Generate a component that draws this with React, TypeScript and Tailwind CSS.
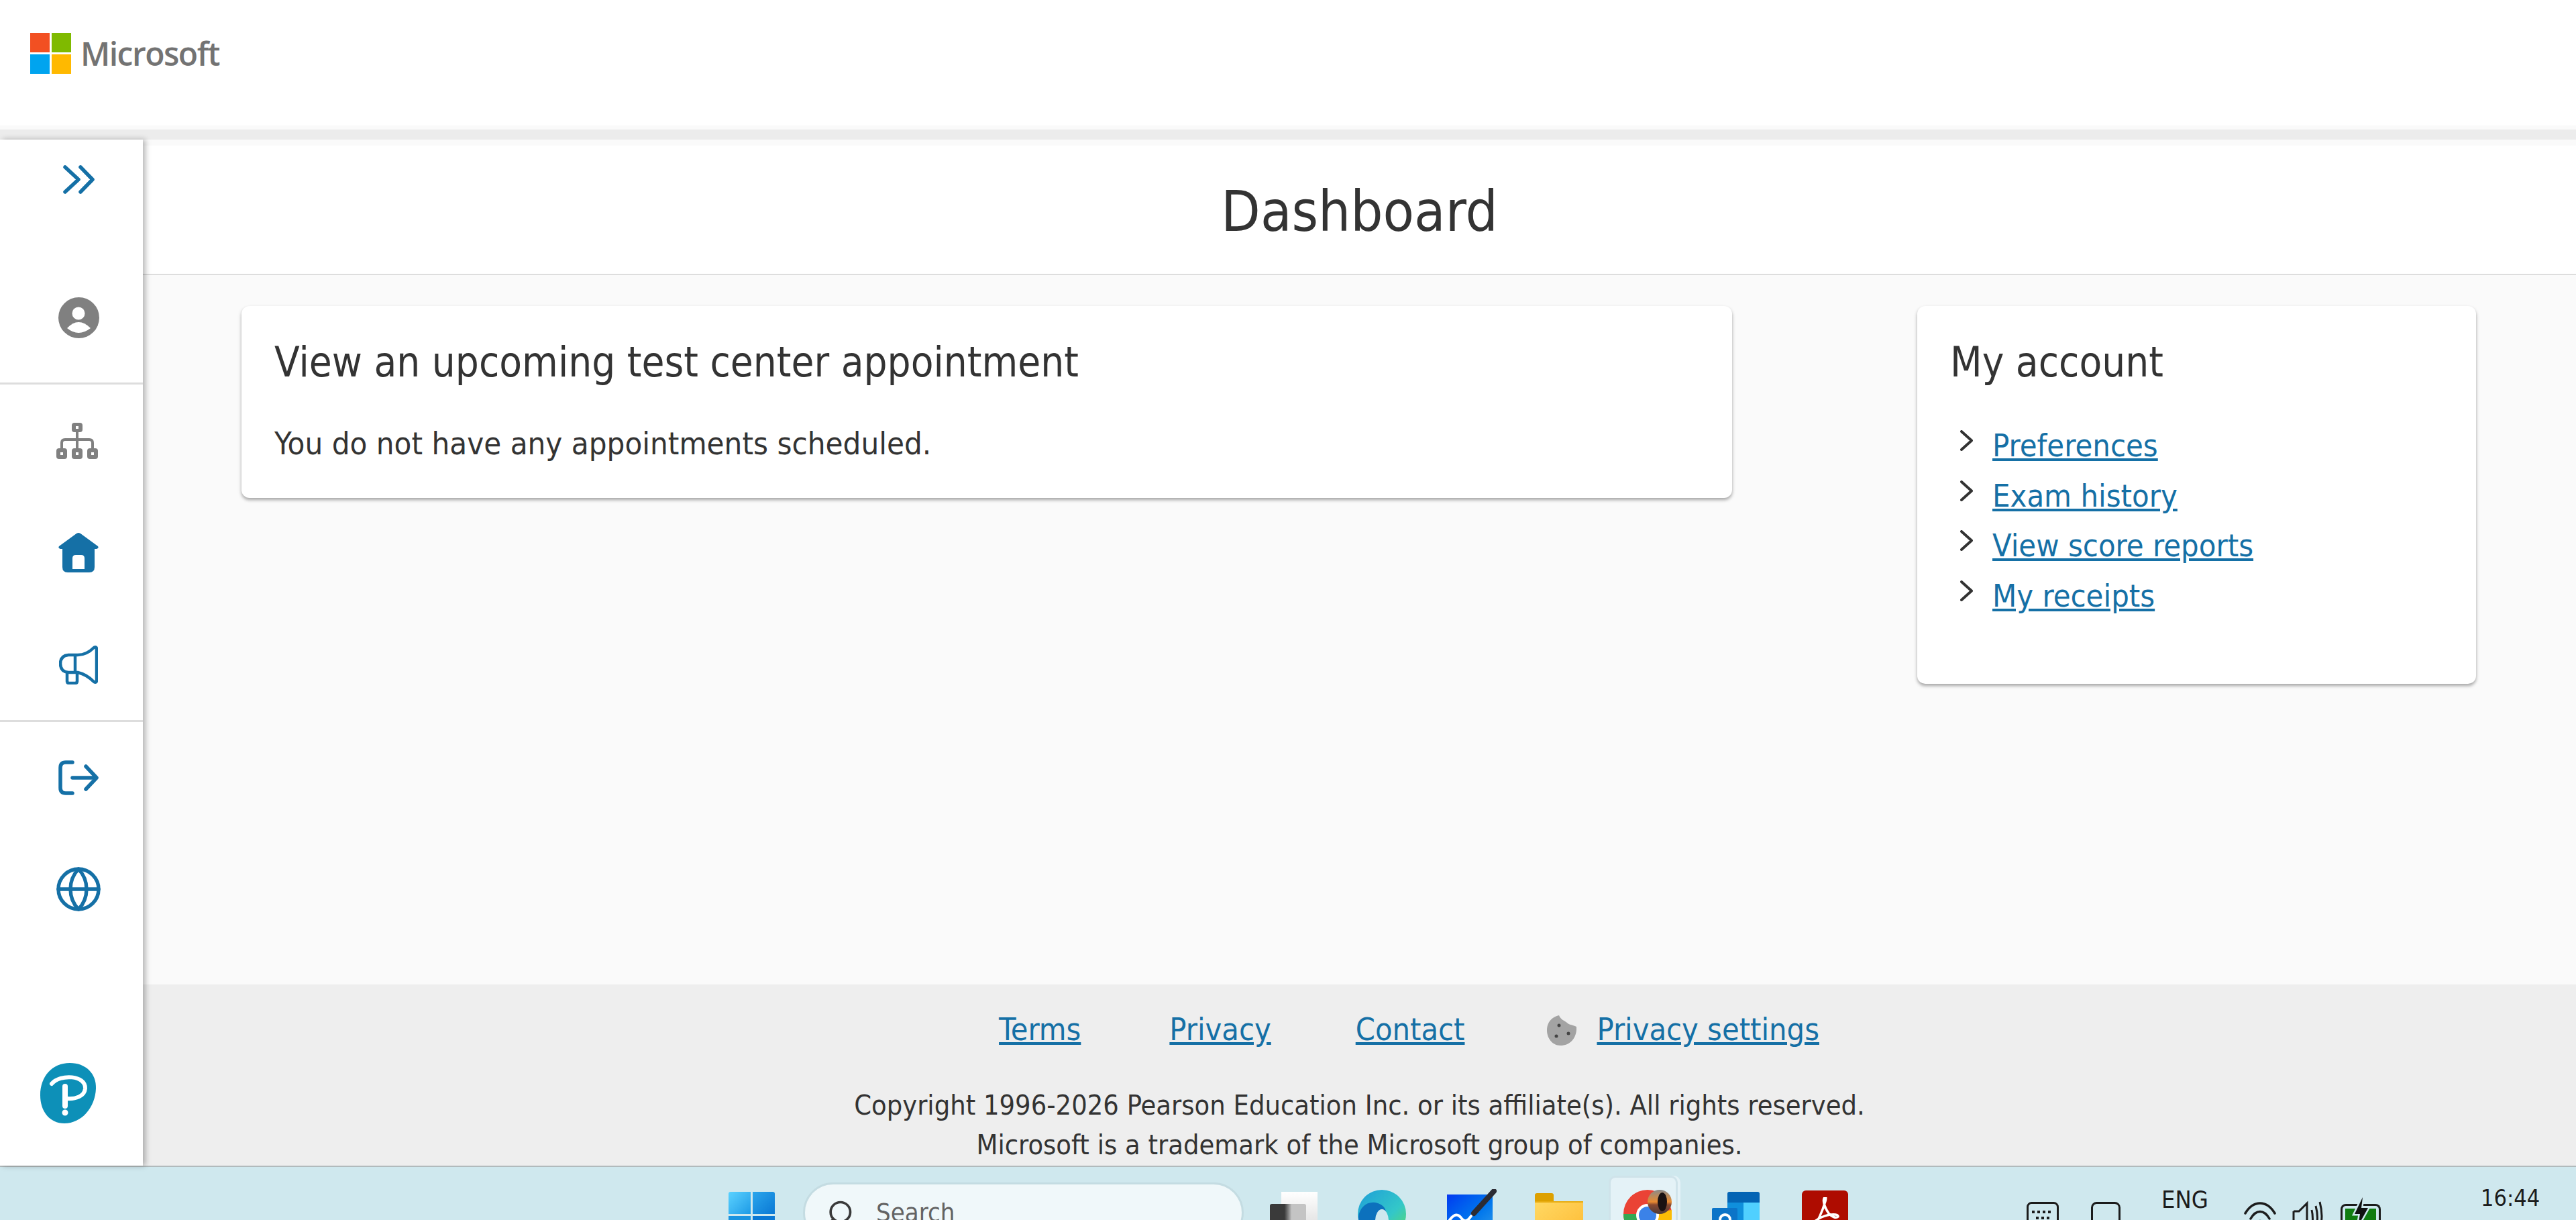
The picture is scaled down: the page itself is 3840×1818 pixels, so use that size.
import { Globe, Search } from "lucide-react";

const FONT = "font-['DejaVu_Sans',sans-serif] [font-stretch:condensed]";

const ACCOUNT_LINKS = ["Preferences", "Exam history", "View score reports", "My receipts"];

function MicrosoftLogo() {
  return (
    <div className="flex items-center ml-[45px] mt-[49px]">
      <div className="grid grid-cols-2 gap-[3px] w-[61px] h-[61px]">
        <div className="bg-[#f25022]" />
        <div className="bg-[#7fba00]" />
        <div className="bg-[#00a4ef]" />
        <div className="bg-[#ffb900]" />
      </div>
      <span className="ml-[14px] text-[48px] leading-[61px] font-semibold tracking-[-1.5px] text-[#737373] font-['Open_Sans',sans-serif] [font-stretch:normal]">Microsoft</span>
    </div>
  );
}

function SideIcons() {
  return (
    <aside className="w-[213px] shrink-0 bg-white flex flex-col z-10 shadow-[4px_0_8px_rgba(0,0,0,0.28)]">
      <div className="h-[365px] pl-[21px] border-b-[3px] border-[#dddddd] flex flex-col items-center">
        <svg className="mt-[38px]" width="47" height="43" viewBox="0 0 47 43" fill="none" stroke="#1570a6" strokeWidth="5.5" strokeLinecap="round" strokeLinejoin="round">
          <path d="M3 3 L23 21.5 L3 40" />
          <path d="M26 3 L44 21.5 L26 40" />
        </svg>
        <svg className="mt-[154px]" width="61" height="61" viewBox="0 0 61 61">
          <circle cx="30.5" cy="30.5" r="30.5" fill="#808080" />
          <circle cx="30" cy="24" r="9.5" fill="#fff" />
          <path d="M13 46 Q30 28 48 46 Q30 60 13 46 Z" fill="#fff" />
        </svg>
      </div>
      <div className="h-[503px] pl-[21px] border-b-[3px] border-[#dddddd] flex flex-col items-center">
        <svg className="mt-[57px] mr-[4px]" width="62" height="54" viewBox="0 0 62 54" fill="none">
          <g fill="#808080">
            <rect x="23" y="0" width="16" height="14" rx="4" />
            <rect x="0" y="38" width="16" height="16" rx="4" />
            <rect x="23" y="38" width="16" height="16" rx="4" />
            <rect x="46" y="38" width="16" height="16" rx="4" />
          </g>
          <g fill="#fff">
            <rect x="29" y="5" width="4" height="4" />
            <rect x="6" y="44" width="4" height="4" />
            <rect x="29" y="44" width="4" height="4" />
            <rect x="52" y="44" width="4" height="4" />
          </g>
          <path d="M31 14 V38 M8 38 V30 Q8 25 13 25 H49 Q54 25 54 30 V38" stroke="#808080" strokeWidth="4" />
        </svg>
        <svg className="mt-[110px]" width="60" height="59" viewBox="0 0 60 59">
          <path d="M30 0 Q31 0 33 1 L59 20 Q61 23 57 24 H54 V51 Q54 59 46 59 H14 Q6 59 6 51 V24 H3 Q-1 23 1 20 L27 1 Q29 0 30 0 Z" fill="#1570a6" />
          <path d="M21 54 V38 Q21 33 26 33 H34 Q39 33 39 38 V54 Z" fill="#fff" />
        </svg>
        <svg className="mt-[109px] mr-[1px]" width="58" height="58" viewBox="0 0 58 58" fill="none" stroke="#1570a6" strokeWidth="4.5" strokeLinejoin="round">
          <path d="M14 14 H28 Q41 14 52 3 Q56 1 56 5 V52 Q56 56 52 54 Q41 43 28 40 H14 Q2 39 2 27 Q2 15 14 14 Z" />
          <path d="M24 14 V40" />
          <path d="M12 40 V53 Q12 56 15 56 H24 Q27 56 27 53 V40" />
        </svg>
      </div>
      <div className="flex-1 pl-[21px] flex flex-col items-center">
        <svg className="mt-[57px]" width="60" height="52" viewBox="0 0 60 52" fill="none" stroke="#1570a6" strokeWidth="5.5" strokeLinecap="round" strokeLinejoin="round">
          <path d="M21 3 H11 Q3 3 3 11 V41 Q3 49 11 49 H21" />
          <path d="M21 26 H56" />
          <path d="M41 9 L57 26 L41 43" />
        </svg>
        <Globe className="mt-[104px]" size={72} color="#1570a6" strokeWidth={1.8} />
        <svg className="mt-[223px] mr-[31px]" width="84" height="90" viewBox="0 0 84 90">
          <path d="M44 0 C68 0 84 16 83 38 C82 66 62 90 36 90 C14 90 0 72 0 48 C0 20 18 0 44 0 Z" fill="#0d90b8" />
          <path d="M17 31 C30 16 68 18 67 38 C66 50 52 54 40 53" fill="none" stroke="#fff" strokeWidth="6" strokeLinecap="round" />
          <path d="M37 35 V64" stroke="#fff" strokeWidth="8" strokeLinecap="round" />
          <circle cx="37" cy="74" r="4.5" fill="#fff" />
        </svg>
      </div>
    </aside>
  );
}

function Cookie() {
  return (
    <svg width="44" height="45" viewBox="0 0 44 45">
      <path d="M18 0 C20 6 26 8 30 11 C32 14 38 14 44 17 C45 32 36 45 20 45 C8 45 0 34 0 22 C0 10 8 2 18 0 Z" fill="#a3a3a3" />
      <circle cx="18" cy="15" r="2.5" fill="#444" />
      <circle cx="14" cy="31" r="2.5" fill="#444" />
      <circle cx="32" cy="27" r="2.5" fill="#444" />
    </svg>
  );
}

function Taskbar() {
  return (
    <div className="h-[81px] shrink-0 border-t-[2px] border-[#b1babc] bg-[#cfe8ee] flex items-start overflow-hidden">
      <div className="ml-[1086px] mt-[37px] grid grid-cols-2 gap-[3px] w-[69px] shrink-0">
        <div className="h-[33px] rounded-tl-[3px] bg-linear-to-br from-[#5ad2ff] to-[#1a9be6]" />
        <div className="h-[33px] rounded-tr-[3px] bg-linear-to-br from-[#2aa6ec] to-[#0a78d4]" />
        <div className="h-[33px] bg-[#1a94e0]" />
        <div className="h-[33px] bg-[#0a78d4]" />
      </div>
      <div className="ml-[42px] mt-[23px] w-[657px] h-[90px] shrink-0 rounded-full border-[3px] border-[#c4dce2] bg-[#f0f8fa] flex items-start">
        <Search className="ml-[29px] mt-[21px] -scale-x-100" size={44} color="#3a3a3a" strokeWidth={2} />
        <span className={`ml-[33px] mt-[18px] text-[38px] leading-[48px] text-[#636363] ${FONT}`}>Search</span>
      </div>
      <div className="ml-[39px] mt-[37px] relative w-[71px] h-[60px] shrink-0">
        <div className="absolute right-0 top-0 w-[54px] h-[60px] bg-linear-to-b from-[#ffffff] to-[#dcdcdc]" />
        <div className="absolute left-0 top-[18px] w-[54px] h-[50px] rounded-[3px] bg-linear-to-r from-[#3a3a3a] from-40% to-[#c4c4c4] to-60%" />
      </div>
      <svg className="ml-[60px] mt-[34px] shrink-0" width="72" height="72" viewBox="0 0 72 72">
        <defs>
          <linearGradient id="edgeTop" x1="0" y1="0" x2="1" y2="1">
            <stop offset="0" stopColor="#1e9ed8" />
            <stop offset="0.6" stopColor="#33c7c9" />
            <stop offset="1" stopColor="#5fdc5f" />
          </linearGradient>
        </defs>
        <circle cx="36" cy="36" r="36" fill="url(#edgeTop)" />
        <path d="M1 40 C4 22 18 16 30 20 C44 24 46 40 38 52 C32 62 34 72 40 72 C14 72 0 60 1 40 Z" fill="#0c71bd" />
        <ellipse cx="36" cy="46" rx="10" ry="17" fill="#cfe8ee" />
        <path d="M24 72 C22 58 30 52 34 62 L32 72 Z" fill="#0a5aa8" />
      </svg>
      <div className="ml-[61px] mt-[41px] relative w-[68px] h-[60px] shrink-0 bg-linear-to-br from-[#0a36f0] to-[#2a9ae8]">
        <svg className="absolute left-0 top-[-8px]" width="74" height="60" viewBox="0 0 74 60" fill="none">
          <path d="M4 46 Q14 32 22 44 Q28 52 36 40" stroke="#fff" strokeWidth="4" strokeLinecap="round" />
          <path d="M40 36 L70 3" stroke="#2c2c34" strokeWidth="8" strokeLinecap="round" />
        </svg>
      </div>
      <div className="ml-[63px] mt-[39px] w-[72px] shrink-0">
        <div className="w-[28px] h-[12px] rounded-t-[3px] bg-[#dda000]" />
        <div className="h-[60px] bg-linear-to-br from-[#ffd862] to-[#fdb92c] border-t-[2px] border-[#e8ac10]" />
      </div>
      <div className="ml-[38px] mt-[13px] w-[103px] h-[70px] shrink-0 relative rounded-t-[10px] border-[3px] border-b-0 border-[#cfe3ea] bg-[#e4f2f7] shadow-[4px_0_0_#e4f2f7]">
        <svg className="absolute left-[19px] top-[18px]" width="72" height="72" viewBox="0 0 72 72">
          <defs>
            <linearGradient id="dusk" x1="0" y1="0" x2="0" y2="1">
              <stop offset="0" stopColor="#8a8a8a" />
              <stop offset="0.5" stopColor="#e88a30" />
              <stop offset="0.62" stopColor="#8a4a30" />
              <stop offset="1" stopColor="#4a3a3a" />
            </linearGradient>
          </defs>
          <circle cx="36" cy="36" r="36" fill="#ea4335" />
          <path d="M36 36 L0 36 A36 36 0 0 0 20 68 Z" fill="#34a853" />
          <path d="M36 36 L72 30 A36 36 0 0 1 50 70 Z" fill="#fbbc05" />
          <circle cx="36" cy="38" r="17" fill="#fff" />
          <circle cx="36" cy="38" r="13" fill="#3b82e8" />
          <ellipse cx="54" cy="18" rx="18" ry="18" fill="url(#dusk)" />
          <ellipse cx="58" cy="18" rx="7" ry="14" fill="#1a1212" />
        </svg>
      </div>
      <div className="ml-[51px] mt-[37px] relative w-[71px] h-[60px] shrink-0">
        <div className="absolute right-0 top-0 w-[48px] h-[60px] rounded-[3px] grid grid-cols-2 grid-rows-[16px_1fr] overflow-hidden">
          <div className="col-span-2 bg-[#0464b4]" />
          <div className="bg-[#0f8fdc]" />
          <div className="bg-[#50d0ff]" />
        </div>
        <div className="absolute left-0 top-[24px] w-[38px] h-[40px] rounded-[2px] bg-[#0c74c8] flex items-start justify-center">
          <div className="mt-[8px] w-[19px] h-[24px] rounded-full border-[4px] border-white" />
        </div>
      </div>
      <div className="ml-[63px] mt-[35px] w-[69px] h-[70px] shrink-0 rounded-[6px] bg-[#ae0c00] flex justify-center">
        <svg className="mt-[10px]" width="44" height="40" viewBox="0 0 44 40" fill="none" stroke="#fff" strokeWidth="3.5">
          <path d="M22 0 C17 2 20 14 27 24 C31 29 38 32 41 29 C42 25 30 24 16 30 C8 34 3 38 5 39 C10 40 18 20 22 6 C23 2 23 0 22 0 Z" />
        </svg>
      </div>
      <svg className="ml-[266px] mt-[52px] shrink-0" width="48" height="40" viewBox="0 0 48 40" fill="none" stroke="#1c1c1c" strokeWidth="3">
        <rect x="1.5" y="1.5" width="45" height="50" rx="6" />
        <g stroke="none" fill="#1c1c1c">
          <rect x="8" y="13" width="4" height="4" />
          <rect x="16" y="13" width="4" height="4" />
          <rect x="24" y="13" width="4" height="4" />
          <rect x="32" y="13" width="4" height="4" />
          <rect x="14" y="22" width="4" height="4" />
          <rect x="22" y="22" width="4" height="4" />
          <rect x="30" y="22" width="4" height="4" />
          <rect x="10" y="31" width="28" height="5" />
        </g>
      </svg>
      <svg className="ml-[48px] mt-[52px] shrink-0" width="44" height="40" viewBox="0 0 44 40" fill="none" stroke="#1c1c1c" strokeWidth="3">
        <rect x="1.5" y="1.5" width="41" height="50" rx="7" />
        <path d="M1.5 29 H42.5 M22 29 V40" />
      </svg>
      <span className={`ml-[61px] mt-[34px] w-[69px] shrink-0 text-[36px] leading-[30px] text-[#1c1c1c] ${FONT}`}>ENG</span>
      <svg className="ml-[54px] mt-[52px] shrink-0" width="48" height="40" viewBox="0 0 48 40" fill="none" stroke="#1c1c1c" strokeWidth="3.5" strokeLinecap="round">
        <path d="M2 17 C14 -3 34 -3 46 17" />
        <path d="M10 25 C18 11 30 11 38 25" />
        <path d="M18 33 C22 27 26 27 30 33" />
      </svg>
      <svg className="ml-[24px] mt-[50px] shrink-0" width="48" height="42" viewBox="0 0 48 42" fill="none" stroke="#1c1c1c" strokeWidth="3">
        <path d="M2 16 H10 L22 4 V42 M2 16 V42" />
        <path d="M29 14 Q32 26 29 42" />
        <path d="M35 8 Q40 26 35 42" />
        <path d="M41 2 Q47 24 41 42" />
      </svg>
      <div className="ml-[24px] mt-[44px] w-[60px] relative shrink-0">
        <div className="mt-[11px] h-[40px] rounded-t-[8px] border-[3px] border-b-0 border-[#1c1c1c] bg-[#cfe8ee] p-[4px]">
          <div className="h-full bg-[#107c10]" />
        </div>
        <svg className="absolute left-[15px] top-0" width="30" height="46" viewBox="0 0 30 46">
          <path d="M18 1 L6 26 H14 L11 44 L26 17 H16 Z" fill="#cfe8ee" stroke="#cfe8ee" strokeWidth="5" />
          <path d="M18 1 L6 26 H14 L11 44 L26 17 H16 Z" fill="#111" />
        </svg>
      </div>
      <span className={`ml-[149px] mt-[30px] text-[34px] leading-[32px] text-[#1c1c1c] ${FONT}`}>16:44</span>
    </div>
  );
}

export default function App() {
  return (
    <div className={`h-[1818px] w-[3840px] flex flex-col overflow-hidden bg-white text-[#333333] ${FONT}`}>
      <header className="h-[187px] shrink-0 bg-white">
        <MicrosoftLogo />
      </header>
      <div className="h-[6px] shrink-0 bg-[#fafafa]" />
      <div className="h-[15px] shrink-0 bg-[#ececec]" />
      <div className="flex flex-1 min-h-0">
        <SideIcons />
        <main className="flex-1 flex flex-col min-w-0 bg-[#fafafa]">
          <div className="mt-[9px] h-[193px] pt-[6px] shrink-0 bg-white border-b-[2px] border-[#dddddd] flex items-center justify-center">
            <h1 className="text-[84.5px] leading-none text-[#333333]">Dashboard</h1>
          </div>
          <div className="flex-1 flex items-start pt-[46px] pl-[147px] pr-[149px] justify-between">
            <section className="w-[2222px] h-[286px] bg-white rounded-[12px] px-[49px] pt-[48px] shadow-[0_3px_5px_rgba(0,0,0,0.35)]">
              <h2 className="text-[61.4px] leading-[72px]">View an upcoming test center appointment</h2>
              <p className="mt-[53px] text-[47px] leading-[64px]">You do not have any appointments scheduled.</p>
            </section>
            <section className="w-[833px] h-[563px] bg-white rounded-[12px] px-[49px] pt-[48px] shadow-[0_3px_5px_rgba(0,0,0,0.35)]">
              <h2 className="text-[61.4px] leading-[72px]">My account</h2>
              <ul className="mt-[56px] flex flex-col gap-[10px]">
                {ACCOUNT_LINKS.map(label => (
                  <li key={label} className="flex items-start h-[64.5px]">
                    <svg className="ml-[15px] mt-[9px] shrink-0" width="19" height="31" viewBox="0 0 19 31" fill="none" stroke="#333333" strokeWidth="4" strokeLinecap="round" strokeLinejoin="round">
                      <path d="M2 2 L17 15.5 L2 29" />
                    </svg>
                    <a className="ml-[29px] text-[46.7px] leading-[64px] text-[#1570a6] underline">{label}</a>
                  </li>
                ))}
              </ul>
            </section>
          </div>
          <footer className="h-[270px] shrink-0 bg-[#eeeeee] flex flex-col items-center">
            <div className="mt-[36px] ml-[148px] flex items-center h-[64px] text-[46.5px] text-[#1570a6]">
              <a className="underline">Terms</a>
              <a className="ml-[132px] underline">Privacy</a>
              <a className="ml-[126px] underline">Contact</a>
              <div className="ml-[123px] mr-[30px]"><Cookie /></div>
              <a className="underline">Privacy settings</a>
            </div>
            <p className="mt-[51px] text-[41.2px] leading-[59px] text-center">
              Copyright 1996-2026 Pearson Education Inc. or its affiliate(s). All rights reserved.
              <br />
              Microsoft is a trademark of the Microsoft group of companies.
            </p>
          </footer>
        </main>
      </div>
      <Taskbar />
    </div>
  );
}
